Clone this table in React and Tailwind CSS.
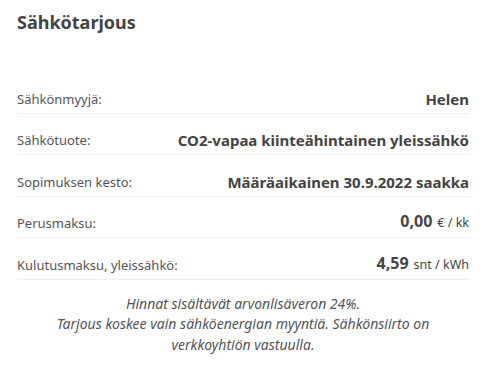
import React from 'react';

const rows = [
  { label: 'Sähkönmyyjä:', value: 'Helen' },
  { label: 'Sähkötuote:', value: 'CO2-vapaa kiinteähintainen yleissähkö' },
  { label: 'Sopimuksen kesto:', value: 'Määräaikainen 30.9.2022 saakka' },
  { label: 'Perusmaksu:', value: '0,00', unit: '€ / kk' },
  { label: 'Kulutusmaksu, yleissähkö:', value: '4,59', unit: 'snt / kWh' },
];

export default function App() {
  return (
    <div className="w-[498px] h-[365px] bg-white text-[#444] font-['Noto_Sans',sans-serif] px-[17px] pr-[29px]">
      <h2 className="pt-[10px] text-[18px] font-bold leading-[25px] text-[#444]">Sähkötarjous</h2>
      <div className="mt-[37px]">
        {rows.map((r) => (
          <div
            key={r.label}
            className="flex items-end justify-between h-[41.5px] pb-[4px] border-b border-[#eee]"
          >
            <span className="text-[13px] text-[#555] leading-[20px]">{r.label}</span>
            {r.unit ? (
              <span className="leading-[20px] text-[#444]">
                <span className="text-[16px] font-bold">{r.value}</span>
                <span className="ml-[5px] text-[12.5px]">{r.unit}</span>
              </span>
            ) : (
              <span className="text-[15px] font-bold leading-[20px] text-[#444]">{r.value}</span>
            )}
          </div>
        ))}
      </div>
      <div className="mt-[14px] text-center italic text-[14px] leading-[20.5px] text-[#555]">
        <p>Hinnat sisältävät arvonlisäveron 24%.</p>
        <p className="px-[16px]">Tarjous koskee vain sähköenergian myyntiä. Sähkönsiirto on verkkoyhtiön vastuulla.</p>
      </div>
    </div>
  );
}
